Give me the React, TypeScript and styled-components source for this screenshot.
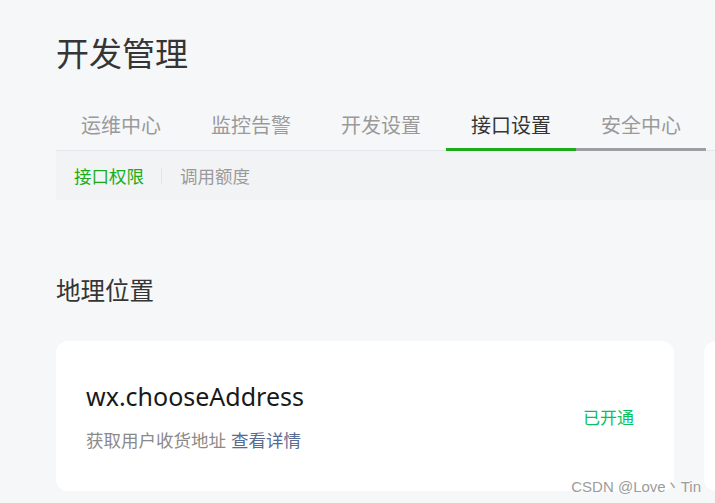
import styled, { createGlobalStyle } from 'styled-components';

const GlobalStyle = createGlobalStyle`
  html, body {
    margin: 0;
    padding: 0;
    background: #f6f7f9;
  }
  body {
    font-family: "Noto Sans", "Noto Sans CJK SC", sans-serif;
  }
`;

const StyledPage = styled.div`
  position: relative;
  width: 715px;
  height: 503px;
  overflow: hidden;
  background: #f6f7f9;
  padding-left: 56px;
  box-sizing: border-box;
`;

const StyledTitle = styled.h1`
  margin: 0;
  padding-top: 32px;
  font-size: 33px;
  line-height: 44px;
  font-weight: 400;
  color: #353535;
  white-space: nowrap;
`;

const StyledTabBar = styled.div`
  display: flex;
  margin-top: 24px;
  width: 900px;
  border-bottom: 1px solid #e5e6ea;
`;

const StyledTab = styled.div<{ $active?: boolean; $hover?: boolean }>`
  flex: 0 0 130px;
  height: 51px;
  box-sizing: border-box;
  margin-bottom: -1px;
  display: flex;
  align-items: center;
  justify-content: center;
  padding-top: 1px;
  font-size: 20px;
  color: ${(p) => (p.$active ? '#353535' : '#9a9a9a')};
  border-bottom: 3px solid
    ${(p) => (p.$active ? '#1aad19' : p.$hover ? '#9d9da3' : 'transparent')};
  white-space: nowrap;
`;

const StyledSubNav = styled.div`
  display: flex;
  align-items: center;
  width: 900px;
  height: 49px;
  background: #f2f3f5;
  padding-left: 18px;
  box-sizing: border-box;
`;

const StyledSubItem = styled.span<{ $active?: boolean }>`
  font-size: 17.5px;
  color: ${(p) => (p.$active ? '#1aad19' : '#9a9a9a')};
  white-space: nowrap;
`;

const StyledSubDivider = styled.span`
  width: 1px;
  height: 16px;
  background: #e3e4e8;
  margin: 0 18px 0 17px;
`;

const StyledSectionTitle = styled.h2`
  margin: 75px 0 0;
  font-size: 24.5px;
  line-height: 32px;
  font-weight: 400;
  color: #353535;
`;

const StyledCardRow = styled.div`
  display: flex;
  gap: 30px;
  margin-top: 34px;
  width: 1400px;
`;

const StyledCard = styled.div`
  flex: 0 0 618px;
  height: 150px;
  box-sizing: border-box;
  background: #fff;
  border-radius: 12px;
  display: flex;
  align-items: center;
  justify-content: space-between;
  padding: 0 40px 0 30px;
`;

const StyledApiInfo = styled.div`
  display: flex;
  flex-direction: column;
`;

const StyledApiName = styled.div`
  font-size: 25px;
  line-height: 32px;
  color: #191919;
`;

const StyledApiDesc = styled.div`
  margin-top: 16px;
  font-size: 17.5px;
  line-height: 24px;
  color: #8a8a8a;
  white-space: nowrap;
`;

const StyledLink = styled.a`
  color: #576b95;
  text-decoration: none;
  margin-left: 5px;
`;

const StyledStatus = styled.span`
  font-size: 17px;
  color: #07c160;
  white-space: nowrap;
`;

const StyledWatermark = styled.div`
  position: absolute;
  right: 14px;
  bottom: 6px;
  font-family: "Liberation Sans", Arial, sans-serif;
  font-size: 15px;
  color: #9c9c9c;
  text-shadow: 0 0 2px #fff;
  white-space: nowrap;
`;

const tabs = ['运维中心', '监控告警', '开发设置', '接口设置', '安全中心'];

export default function App() {
  return (
    <>
      <GlobalStyle />
      <StyledPage>
        <StyledTitle>开发管理</StyledTitle>
        <StyledTabBar>
          {tabs.map((t) => (
            <StyledTab key={t} $active={t === '接口设置'} $hover={t === '安全中心'}>
              {t}
            </StyledTab>
          ))}
        </StyledTabBar>
        <StyledSubNav>
          <StyledSubItem $active>接口权限</StyledSubItem>
          <StyledSubDivider />
          <StyledSubItem>调用额度</StyledSubItem>
        </StyledSubNav>
        <StyledSectionTitle>地理位置</StyledSectionTitle>
        <StyledCardRow>
          <StyledCard>
            <StyledApiInfo>
              <StyledApiName>wx.chooseAddress</StyledApiName>
              <StyledApiDesc>
                获取用户收货地址<StyledLink href="#">查看详情</StyledLink>
              </StyledApiDesc>
            </StyledApiInfo>
            <StyledStatus>已开通</StyledStatus>
          </StyledCard>
          <StyledCard />
        </StyledCardRow>
        <StyledWatermark>CSDN @Love丶Tin</StyledWatermark>
      </StyledPage>
    </>
  );
}
